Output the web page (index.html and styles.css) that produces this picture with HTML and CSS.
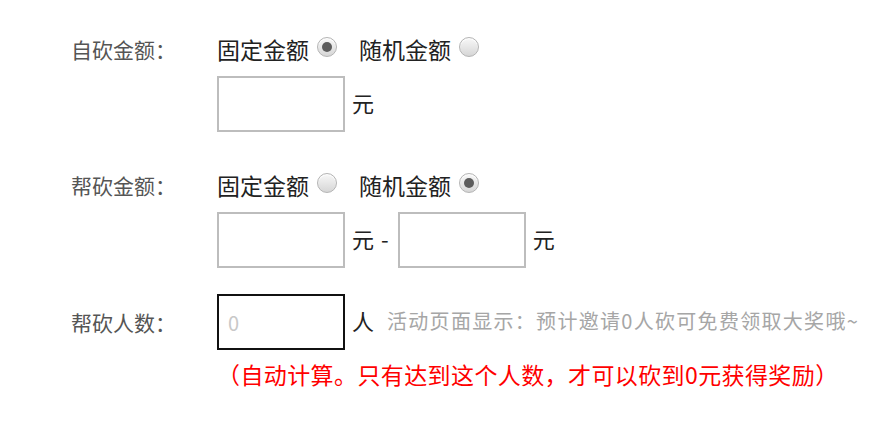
FILE: index.html
```html
<!DOCTYPE html>
<html lang="zh-CN">
<head>
    <meta charset="UTF-8">
    <title>砍价设置</title>
    <link rel="stylesheet" href="styles.css">
</head>
<body>
    <div class="form">
        <div class="form-row">
            <label class="row-label">自砍金额：</label>
            <div class="field">
                <div class="options">
                    <label class="option">固定金额 <input type="radio" name="self" checked></label>
                    <label class="option">随机金额 <input type="radio" name="self"></label>
                </div>
                <div class="inputs">
                    <input type="text" class="box">
                    <span class="unit">元</span>
                </div>
            </div>
        </div>

        <div class="form-row row-range">
            <label class="row-label">帮砍金额：</label>
            <div class="field">
                <div class="options">
                    <label class="option">固定金额 <input type="radio" name="help"></label>
                    <label class="option">随机金额 <input type="radio" name="help" checked></label>
                </div>
                <div class="inputs">
                    <input type="text" class="box">
                    <span class="unit">元</span>
                    <span class="dash">-</span>
                    <input type="text" class="box">
                    <span class="unit">元</span>
                </div>
            </div>
        </div>

        <div class="form-row row-people">
            <label class="row-label">帮砍人数：</label>
            <div class="field">
                <div class="inputs">
                    <input type="text" class="box box-dark" placeholder="0">
                    <span class="unit">人</span>
                    <span class="hint">活动页面显示：预计邀请0人砍可免费领取大奖哦~</span>
                </div>
            </div>
        </div>
        <p class="note">（自动计算。只有达到这个人数，才可以砍到0元获得奖励）</p>
    </div>
</body>
</html>
```

FILE: styles.css
```css
body {
    margin: 0;
    background: #fff;
    font-family: "Noto Sans CJK SC", "Noto Sans", sans-serif;
    color: #222;
}

.form {
    padding: 34px 0 0 71px;
}

.form-row {
    display: flex;
    align-items: flex-start;
    margin-bottom: 38px;
}

.row-label {
    width: 146px;
    flex-shrink: 0;
    font-size: 21px;
    line-height: 30px;
    color: #555;
}

.field {
    display: flex;
    flex-direction: column;
    gap: 12px;
}

.options {
    display: flex;
    gap: 22px;
    height: 30px;
    align-items: center;
}

.option {
    display: flex;
    align-items: center;
    gap: 8px;
    font-size: 23px;
    line-height: 30px;
    color: #222;
}

.option input {
    -webkit-appearance: none;
    appearance: none;
    margin: -5px 0 0 0;
    width: 20px;
    height: 20px;
    border-radius: 50%;
    border: 1px solid #b4b4b4;
    background: linear-gradient(#f8f8f8, #d6d6d6);
    box-shadow: inset 0 1px 1px #fff;
    position: relative;
}

.option input:checked::after {
    content: "";
    position: absolute;
    left: 4px;
    top: 4px;
    width: 10px;
    height: 10px;
    border-radius: 50%;
    background: #5c5c5c;
}

.inputs {
    display: flex;
    align-items: center;
    gap: 7px;
}

.box {
    width: 128px;
    height: 56px;
    box-sizing: border-box;
    border: 2px solid #bdbdbd;
    padding: 0 9px;
    font-size: 20px;
    font-family: inherit;
    outline: none;
}

.box::placeholder {
    color: #c8c8c8;
}

.box-dark {
    border-color: #111;
}

.unit,
.dash {
    font-size: 22px;
    color: #222;
    margin-top: -4px;
}

.dash {
    margin-right: 2px;
}

.hint {
    margin-left: 6px;
    margin-top: -4px;
    font-size: 20px;
    letter-spacing: 1.3px;
    color: #a6a6a6;
}

.row-range {
    margin-bottom: 26px;
}

.row-people {
    align-items: center;
    margin-bottom: 0;
}

.note {
    margin: 9px 0 0 146px;
    font-size: 23px;
    letter-spacing: 0.4px;
    line-height: 30px;
    color: #ff0000;
}
```
